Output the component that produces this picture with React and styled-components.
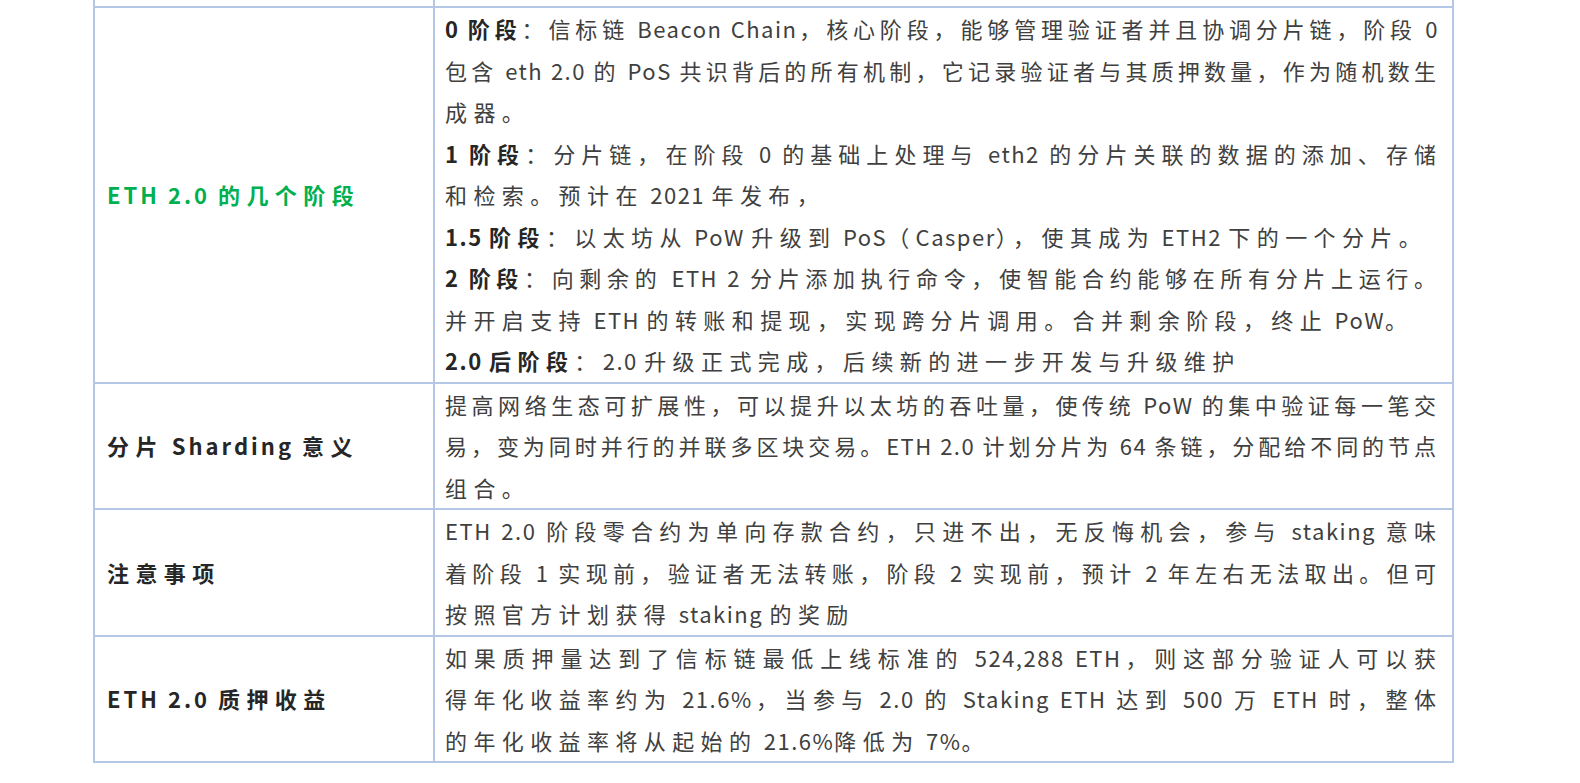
import React from "react"
import styled, { createGlobalStyle } from "styled-components"

const GlobalStyle = createGlobalStyle`
  html, body {
    margin: 0;
    padding: 0;
    background: #ffffff;
  }
  body {
    font-family: "Noto Sans CJK SC", "Noto Sans", sans-serif;
  }
`

const Page = styled.div`
  padding-left: 93px;
  height: 783px;
  overflow: hidden;
`

const Table = styled.table`
  width: 1361px;
  table-layout: fixed;
  border-collapse: collapse;
  font-size: 22px;
  line-height: 41.5px;
`

const Row = styled.tr`
  height: ${(p) => (p.$stub ? "7px" : "auto")};
`

const Cell = styled.td`
  border: 2px solid #b4c7e7;
  border-top: ${(p) => (p.$stub ? "none" : "2px solid #b4c7e7")};
  padding: 0 13px 0 ${(p) => (p.$label ? "12px" : "10px")};
  vertical-align: middle;
  color: #404040;
`

const Label = styled.span`
  font-weight: 700;
  letter-spacing: 6.4px;
  color: ${(p) => (p.$green ? "#00b050" : "#262626")};
`

// one visual line of a cell; full lines are justified, the last line of a paragraph is not
const Line = styled.span`
  display: block;
  text-align: ${(p) => (p.$last ? "left" : "justify")};
  text-align-last: ${(p) => (p.$last ? "left" : "justify")};
  letter-spacing: ${(p) => (p.$last ? "6.4px" : "3px")};
`

const Latin = styled.span`
  letter-spacing: ${(p) => (p.$wide ? "3px" : "1.5px")};
`

const Strong = styled.b`
  font-weight: 700;
  color: #262626;
`

const runs = (text, wide) =>
  text
    .split(/([\u0020-\u024f]+)/)
    .filter(Boolean)
    .map((t, i) =>
      /^[\u0020-\u024f]+$/.test(t) ? (
        <Latin key={i} $wide={wide}>
          {t}
        </Latin>
      ) : (
        t
      )
    )

const stages = [
  [
    ["0 阶段", "：信标链 Beacon Chain，核心阶段，能够管理验证者并且协调分片链，阶段 0"],
    ["", "包含 eth 2.0 的 PoS 共识背后的所有机制，它记录验证者与其质押数量，作为随机数生"],
    ["", "成器。"],
  ],
  [
    ["1 阶段", "：分片链，在阶段 0 的基础上处理与 eth2 的分片关联的数据的添加、存储"],
    ["", "和检索。预计在 2021 年发布，"],
  ],
  [["1.5 阶段", "：以太坊从 PoW 升级到 PoS（Casper），使其成为 ETH2 下的一个分片。"]],
  [
    ["2 阶段", "：向剩余的 ETH 2 分片添加执行命令，使智能合约能够在所有分片上运行。"],
    ["", "并开启支持 ETH 的转账和提现，实现跨分片调用。合并剩余阶段，终止 PoW。"],
  ],
  [["2.0 后阶段", "：2.0 升级正式完成，后续新的进一步开发与升级维护"]],
]

const rows = [
  {
    label: "分片 Sharding 意义",
    lines: [
      "提高网络生态可扩展性，可以提升以太坊的吞吐量，使传统 PoW 的集中验证每一笔交",
      "易，变为同时并行的并联多区块交易。ETH 2.0 计划分片为 64 条链，分配给不同的节点",
      "组合。",
    ],
  },
  {
    label: "注意事项",
    lines: [
      "ETH 2.0 阶段零合约为单向存款合约，只进不出，无反悔机会，参与 staking 意味",
      "着阶段 1 实现前，验证者无法转账，阶段 2 实现前，预计 2 年左右无法取出。但可",
      "按照官方计划获得 staking 的奖励",
    ],
  },
  {
    label: "ETH 2.0 质押收益",
    lines: [
      "如果质押量达到了信标链最低上线标准的 524,288 ETH，则这部分验证人可以获",
      "得年化收益率约为 21.6%，当参与 2.0 的 Staking ETH 达到 500 万 ETH 时，整体",
      "的年化收益率将从起始的 21.6%降低为 7%。",
    ],
  },
]

const App = () => {
  return (
    <Page>
      <GlobalStyle />
      <Table>
        <colgroup>
          <col style={{ width: "340px" }} />
          <col />
        </colgroup>
        <tbody>
          <Row $stub>
            <Cell $stub />
            <Cell $stub />
          </Row>
          <Row>
            <Cell $label>
              <Label $green>{runs("ETH 2.0 的几个阶段", true)}</Label>
            </Cell>
            <Cell>
              {stages.map((para, pi) =>
                para.map(([head, body], li) => (
                  <Line key={`${pi}-${li}`} $last={li === para.length - 1}>
                    {head && <Strong>{runs(head)}</Strong>}
                    {runs(body)}
                  </Line>
                ))
              )}
            </Cell>
          </Row>
          {rows.map((r) => (
            <Row key={r.label}>
              <Cell $label>
                <Label>{runs(r.label, true)}</Label>
              </Cell>
              <Cell>
                {r.lines.map((l, i) => (
                  <Line key={i} $last={i === r.lines.length - 1}>
                    {runs(l)}
                  </Line>
                ))}
              </Cell>
            </Row>
          ))}
        </tbody>
      </Table>
    </Page>
  )
}

export default App
